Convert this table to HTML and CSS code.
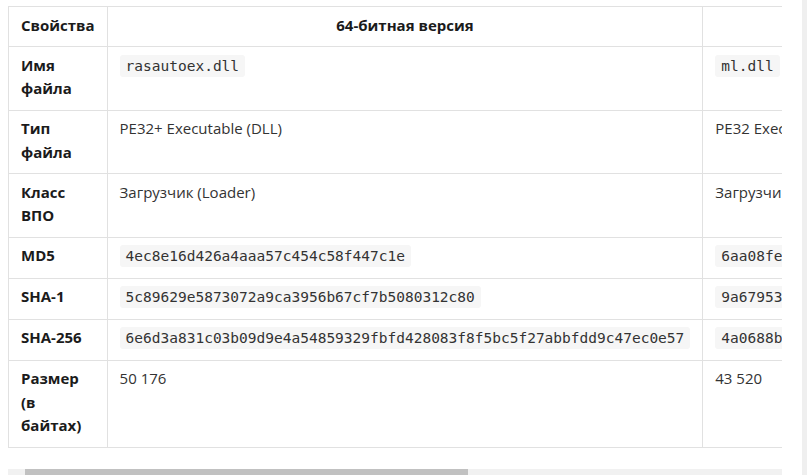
FILE: index.html
```html
<!DOCTYPE html>
<html>
<head>
    <title>Характеристики файлов</title>
    <link rel="stylesheet" href="styles.css">
</head>
<body>
    <div class="page">
        <div class="table-wrap">
            <table class="props">
                <thead>
                    <tr>
                        <th class="name-col">Свойства</th>
                        <th>64-битная версия</th>
                        <th>32-битная версия</th>
                    </tr>
                </thead>
                <tbody>
                    <tr>
                        <th>Имя файла</th>
                        <td><code>rasautoex.dll</code></td>
                        <td><code>ml.dll</code></td>
                    </tr>
                    <tr>
                        <th>Тип файла</th>
                        <td>PE32+ Executable (DLL)</td>
                        <td>PE32 Executable (DLL)</td>
                    </tr>
                    <tr>
                        <th>Класс ВПО</th>
                        <td>Загрузчик (Loader)</td>
                        <td>Загрузчик (Loader)</td>
                    </tr>
                    <tr>
                        <th>MD5</th>
                        <td><code>4ec8e16d426a4aaa57c454c58f447c1e</code></td>
                        <td><code>6aa08fe3b1c94d27e05a8f61c2d7b93e</code></td>
                    </tr>
                    <tr>
                        <th>SHA-1</th>
                        <td><code>5c89629e5873072a9ca3956b67cf7b5080312c80</code></td>
                        <td><code>9a679534e0c1d8b27f36a90e5d41c8b73f2e6a15</code></td>
                    </tr>
                    <tr>
                        <th>SHA-256</th>
                        <td><code>6e6d3a831c03b09d9e4a54859329fbfd428083f8f5bc5f27abbfdd9c47ec0e57</code></td>
                        <td><code>4a0688b27c5e91d3f0a64b8e2d17c93a5f0e48b1d6a2c7e93f15b04d8c6a2e71</code></td>
                    </tr>
                    <tr>
                        <th>Размер (в байтах)</th>
                        <td>50 176</td>
                        <td>43 520</td>
                    </tr>
                </tbody>
            </table>
        </div>
        <!-- horizontal scrollbar of the table box -->
        <div class="scrollbar">
            <div class="scroll-thumb" style="width: 443px"></div>
        </div>
    </div>
</body>
</html>
```

FILE: styles.css
```css
html,
body {
    margin: 0;
    overflow: hidden;
    background-color: #fff;
}

body {
    font-family: "Open Sans", Arial, sans-serif;
    font-size: 15px;
    color: #333;
}

.page {
    width: 794px;
    height: 475px;
    padding: 6px 0 0 8px;
    border-right: 5px solid #efefef;
    overflow: hidden;
}

.table-wrap {
    width: 774px;
    overflow: hidden;
    padding-bottom: 21px;
}

.scrollbar {
    width: 757px;
    height: 17px;
    padding-left: 17px;
    background-color: #f1f1f1;
}

.scroll-thumb {
    height: 100%;
    background-color: #c1c1c1;
}

.props {
    border-collapse: collapse;
    line-height: 23.5px;
}

.props th,
.props td {
    border: 1px solid #e1e1e1;
    padding: 6.5px 12px 9px;
    vertical-align: top;
    text-align: left;
}

.props th {
    font-weight: bold;
    color: #1b1b1b;
}

.props thead th {
    text-align: center;
}

.props .name-col {
    width: 73px;
}

.props code {
    font-family: "DejaVu Sans Mono", "Liberation Mono", monospace;
    font-size: 14.5px;
    color: #333;
    background-color: #f6f6f6;
    padding: 3px 6px;
    border-radius: 3px;
    white-space: nowrap;
}
```
